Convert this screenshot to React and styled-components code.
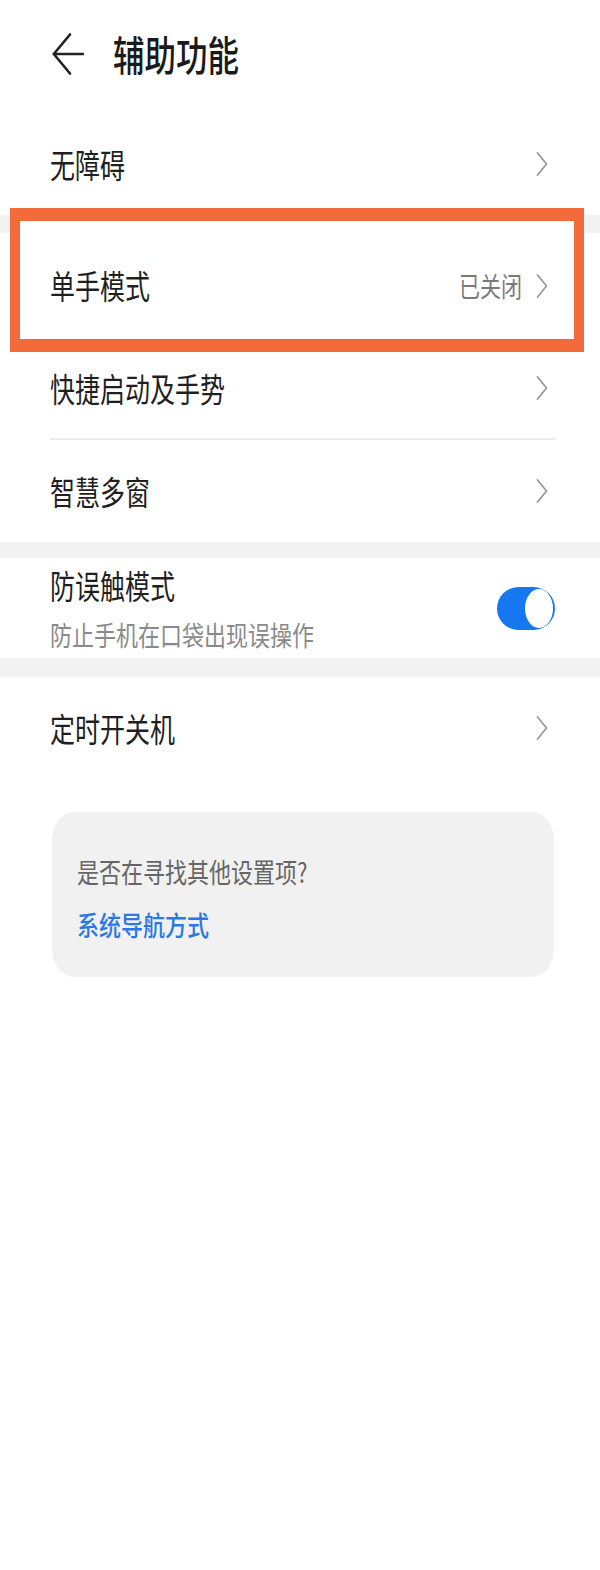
import React from "react";
import styled, { createGlobalStyle } from "styled-components";

const GlobalStyle = createGlobalStyle`
  html, body {
    margin: 0;
    padding: 0;
    background: #ffffff;
  }
  body {
    font-family: "Noto Sans CJK SC", "Noto Sans", sans-serif;
  }
`;

const Page = styled.div`
  width: 600px;
  min-height: 1570px;
  background: #ffffff;
`;

const Header = styled.header`
  height: 113px;
  box-sizing: border-box;
  padding: 0 0 6px 52px;
  display: flex;
  align-items: center;
  gap: 29px;
`;

const Title = styled.h1`
  margin: 0;
  font-size: 31.5px;
  font-weight: 500;
  line-height: 1;
  color: #1a1a1a;
  transform: scaleY(1.3);
`;

const Band = styled.div`
  height: ${(p) => p.$h}px;
  background: #f2f2f2;
`;

const Row = styled.div`
  height: ${(p) => p.$h}px;
  box-sizing: border-box;
  padding: 0 ${(p) => p.$pr || 52}px 0 50px;
  display: flex;
  align-items: center;
  gap: 14px;
`;

const Label = styled.span`
  flex: 1;
  display: inline-block;
  font-size: 25px;
  line-height: 1;
  color: #1f1f1f;
  transform: scaleY(1.3);
  transform-origin: center;
`;

const Value = styled.span`
  display: inline-block;
  font-size: 21px;
  line-height: 1;
  color: #7a7a7a;
  transform: scaleY(1.3);
`;

const TextBlock = styled.div`
  flex: 1;
  display: flex;
  flex-direction: column;
  gap: 16px;
`;

const BlockTitle = styled.span`
  display: inline-block;
  font-size: 25px;
  line-height: 34px;
  color: #1f1f1f;
  transform: scaleY(1.3);
`;

const Subtitle = styled.span`
  display: inline-block;
  font-size: 22px;
  line-height: 30px;
  color: #8a8a8a;
  transform: scaleY(1.25);
`;

const Divider = styled.div`
  height: 2px;
  background: #ececec;
  margin: 0 45px 0 50px;
`;

const Highlight = styled.div`
  position: relative;
`;

const Frame = styled.div`
  position: absolute;
  top: -25px;
  bottom: -14px;
  left: 10px;
  right: 16px;
  border-style: solid;
  border-color: #f36b3b;
  border-width: 13px 10px 13px 10px;
  box-shadow: inset 0 12px 0 #ffffff;
  pointer-events: none;
`;

const Switch = styled.div`
  position: relative;
  width: 58px;
  height: 43px;
  border-radius: 22px;
  background: #1677f0;
  flex-shrink: 0;
`;

const Knob = styled.div`
  position: absolute;
  top: 2px;
  right: 2px;
  width: 28px;
  height: 39px;
  border-radius: 50%;
  background: #ffffff;
`;

const Card = styled.div`
  margin: 33px 46px 0 52px;
  height: 165px;
  box-sizing: border-box;
  padding: 43px 25px 39px;
  border-radius: 22px / 28px;
  background: #f1f1f1;
  display: flex;
  flex-direction: column;
  gap: 23px;
`;

const Hint = styled.span`
  display: inline-block;
  font-size: 22px;
  line-height: 30px;
  color: #666666;
  transform: scaleY(1.25);
  transform-origin: left center;
`;

const Link = styled.span`
  display: inline-block;
  font-size: 22px;
  line-height: 30px;
  font-weight: 500;
  color: #2a78e4;
  transform: scaleY(1.25);
  transform-origin: left center;
`;

const BackIcon = () => (
  <svg width="32" height="42" viewBox="0 0 32 42" fill="none">
    <polyline
      points="18,1.5 1.8,21 18,40.5"
      stroke="#222"
      strokeWidth="2.6"
      strokeLinecap="round"
      strokeLinejoin="round"
    />
    <line x1="2" y1="21" x2="31" y2="21" stroke="#222" strokeWidth="2.6" strokeLinecap="round" />
  </svg>
);

const Chevron = () => (
  <svg width="12" height="26" viewBox="0 0 12 26" fill="none">
    <polyline
      points="1.5,2 10.5,13 1.5,24"
      stroke="#9a9a9a"
      strokeWidth="1.8"
      strokeLinecap="round"
      strokeLinejoin="round"
    />
  </svg>
);

const NavRow = ({ label, value, h = 102 }) => (
  <Row $h={h}>
    <Label>{label}</Label>
    {value && <Value>{value}</Value>}
    <Chevron />
  </Row>
);

export default function App() {
  return (
    <Page>
      <GlobalStyle />
      <Header>
        <BackIcon />
        <Title>辅助功能</Title>
      </Header>

      <NavRow label="无障碍" h={102} />
      <Band $h={18} />

      <Highlight>
        <NavRow label="单手模式" value="已关闭" h={105} />
        <Frame />
      </Highlight>
      <NavRow label="快捷启动及手势" h={100} />
      <Divider />
      <NavRow label="智慧多窗" h={102} />
      <Band $h={16} />

      <Row $h={100} $pr={45}>
        <TextBlock>
          <BlockTitle>防误触模式</BlockTitle>
          <Subtitle>防止手机在口袋出现误操作</Subtitle>
        </TextBlock>
        <Switch>
          <Knob />
        </Switch>
      </Row>
      <Band $h={19} />

      <NavRow label="定时开关机" h={102} />

      <Card>
        <Hint>是否在寻找其他设置项?</Hint>
        <Link>系统导航方式</Link>
      </Card>
    </Page>
  );
}
